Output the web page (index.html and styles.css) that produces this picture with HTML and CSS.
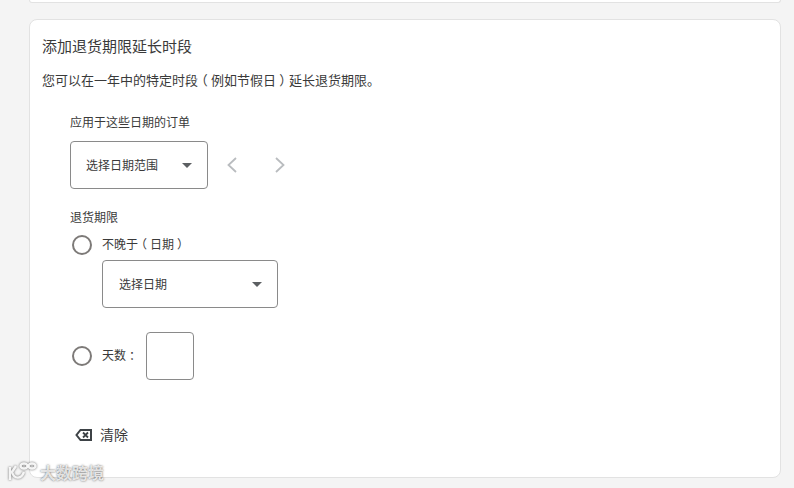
FILE: index.html
```html
<!DOCTYPE html>
<html lang="zh-CN">
<head>
  <meta charset="UTF-8" />
  <title>退货期限</title>
  <link rel="stylesheet" href="styles.css">
</head>
<body>
  <div class="card-top"></div>

  <div class="card">
    <h2>添加退货期限延长时段</h2>
    <p class="intro">您可以在一年中的特定时段<span class="punct">（</span>例如节假日<span class="punct">）</span>延长退货期限。</p>

    <div class="form">
      <div class="label">应用于这些日期的订单</div>
      <div class="range-row">
        <div class="select select-range">
          <span class="select-text">选择日期范围</span>
          <span class="caret"></span>
        </div>
        <svg class="chevron" width="14" height="18" viewBox="0 0 14 18"><path d="M11 2 L3.5 9 L11 16" /></svg>
        <svg class="chevron chevron-next" width="14" height="18" viewBox="0 0 14 18"><path d="M3 2 L10.5 9 L3 16" /></svg>
      </div>

      <div class="label label-period">退货期限</div>
      <div class="radio-row">
        <span class="radio"></span>
        <span class="radio-text">不晚于<span class="punct">（</span>日期<span class="punct">）</span></span>
      </div>
      <div class="select select-date">
        <span class="select-text">选择日期</span>
        <span class="caret"></span>
      </div>

      <div class="radio-row radio-days">
        <span class="radio"></span>
        <span class="radio-text">天数<span class="punct">：</span></span>
        <div class="days-input"></div>
      </div>

      <div class="clear">
        <svg width="18" height="14" viewBox="0 0 18 14"><path class="clear-outline" d="M5.5 2 H16 V12 H5.5 L1.5 7 Z" /><path class="clear-x" d="M8 4.5 L13 9.5 M13 4.5 L8 9.5" /></svg>
        <span class="clear-text">清除</span>
      </div>
    </div>
  </div>

  <div class="watermark">
    <svg width="30" height="24" viewBox="0 0 30 24"><path d="M3 7 V20 M9 6 L5 12 C7 19 14 20 17 12" /><ellipse cx="17" cy="6" rx="3.5" ry="2.5" /><ellipse cx="25" cy="6" rx="3.5" ry="2.5" /></svg>
    <span>大数跨境</span>
  </div>
</body>
</html>
```

FILE: styles.css
```css
* {
  margin: 0;
  padding: 0;
  box-sizing: border-box;
}
html, body {
  height: 100%;
  overflow: hidden;
}
body {
  position: relative;
  background-color: #f4f4f4;
  color: #3a3a3a;
  font-family: "Noto Sans CJK SC", "Liberation Sans", sans-serif;
  font-size: 12px;
  padding: 0 13px 0 29px;
}
.card-top {
  height: 3px;
  background-color: #fff;
  border: 1px solid #e2e2e2;
  border-top: none;
  border-radius: 0 0 8px 8px;
}
.card {
  height: 459px;
  margin-top: 16px;
  padding: 16px 12px 0;
  background-color: #fff;
  border: 1px solid #e2e2e2;
  border-radius: 8px;
}
h2 {
  font-size: 15px;
  font-weight: 400;
  line-height: 20px;
}
.intro {
  margin-top: 14px;
  font-size: 13px;
  line-height: 20px;
}
/* full-width punctuation sits centred in its cell here */
.punct {
  display: inline-block;
  width: 1em;
  text-align: center;
  font-feature-settings: "halt";
}
.form {
  padding-left: 28px;
}
.label {
  margin-top: 23px;
  line-height: 18px;
}
.range-row {
  display: flex;
  align-items: center;
  margin-top: 10px;
}
.select {
  display: flex;
  align-items: center;
  justify-content: space-between;
  background-color: #fff;
  border: 1px solid #8a8a8a;
  border-radius: 4px;
}
.select-text {
  margin-bottom: 2px;
}
.select-range {
  width: 138px;
  height: 48px;
  padding: 0 15px;
  margin-right: 17px;
}
.select-date {
  width: 176px;
  height: 48px;
  margin: 5px 0 0 32px;
  padding: 0 15px 0 16px;
}
.caret {
  width: 0;
  height: 0;
  border-left: 5px solid transparent;
  border-right: 5px solid transparent;
  border-top: 5px solid #5c5f62;
}
.chevron {
  fill: none;
  stroke: #b9bcbf;
  stroke-width: 1.8;
}
.chevron-next {
  margin-left: 34px;
}
.label-period {
  margin-top: 19px;
}
.radio-row {
  display: flex;
  align-items: center;
  margin-top: 9px;
}
.radio {
  width: 20px;
  height: 20px;
  margin: 0 10px 0 2px;
  border: 2px solid #7d7a78;
  border-radius: 50%;
}
.radio-text {
  line-height: 18px;
  margin-bottom: 2px;
}
.radio-days {
  margin-top: 24px;
}
.days-input {
  width: 48px;
  height: 48px;
  margin-left: 8px;
  border: 1px solid #8a8a8a;
  border-radius: 4px;
}
.clear {
  display: flex;
  align-items: center;
  gap: 7px;
  margin: 45px 0 0 5px;
  font-size: 14px;
  line-height: 18px;
}
.clear-text {
  margin-bottom: 2px;
}
.clear-outline {
  fill: none;
  stroke: #3d4246;
  stroke-width: 2;
}
.clear-x {
  fill: none;
  stroke: #3d4246;
  stroke-width: 1.8;
}
.watermark {
  position: absolute;
  left: 7px;
  top: 460px;
  display: flex;
  align-items: center;
  gap: 3px;
  color: rgba(255, 255, 255, 0.8);
  font-size: 16px;
  font-weight: 700;
  text-shadow: 0 0 2px rgba(70, 70, 70, 0.9);
}
.watermark svg {
  fill: none;
  stroke: rgba(255, 255, 255, 0.9);
  stroke-width: 2.4;
  filter: drop-shadow(0 0 1px rgba(70, 70, 70, 0.9));
}
```
